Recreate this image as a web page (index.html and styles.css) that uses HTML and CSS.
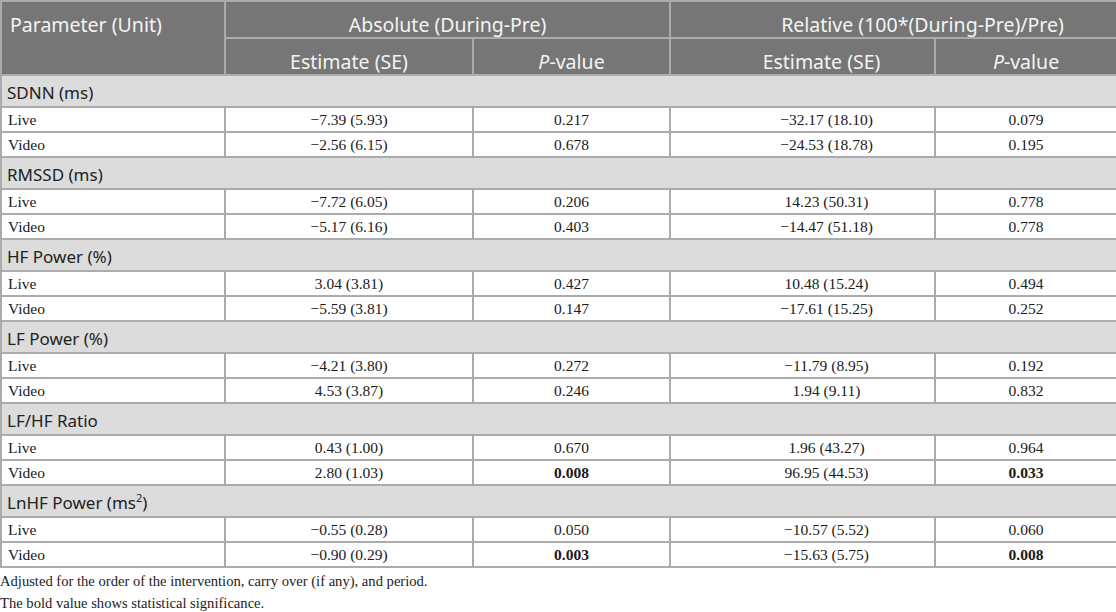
FILE: index.html
```html
<!DOCTYPE html>
<html lang="en">

<head>
  <meta charset="UTF-8">
  <meta name="viewport" content="width=device-width, initial-scale=1.0">
  <title>HRV table</title>

  <link rel="stylesheet" href="styles.css">
</head>

<body>
  <table class="results">
    <colgroup>
      <col class="col-param">
      <col class="col-est">
      <col class="col-p">
      <col class="col-rel">
      <col class="col-p2">
    </colgroup>
    <thead>
      <tr>
        <th rowspan="2" class="param-head">Parameter (Unit)</th>
        <th colspan="2">Absolute (During-Pre)</th>
        <th colspan="2" class="rel-head">Relative (100*(During-Pre)/Pre)</th>
      </tr>
      <tr>
        <th>Estimate (SE)</th>
        <th><i>P</i>-value</th>
        <th class="rel">Estimate (SE)</th>
        <th><i>P</i>-value</th>
      </tr>
    </thead>
    <tbody>
      <tr class="section"><td colspan="5">SDNN (ms)</td></tr>
      <tr><td class="label">Live</td><td>−7.39 (5.93)</td><td>0.217</td><td class="rel">−32.17 (18.10)</td><td>0.079</td></tr>
      <tr><td class="label">Video</td><td>−2.56 (6.15)</td><td>0.678</td><td class="rel">−24.53 (18.78)</td><td>0.195</td></tr>

      <tr class="section"><td colspan="5">RMSSD (ms)</td></tr>
      <tr><td class="label">Live</td><td>−7.72 (6.05)</td><td>0.206</td><td class="rel">14.23 (50.31)</td><td>0.778</td></tr>
      <tr><td class="label">Video</td><td>−5.17 (6.16)</td><td>0.403</td><td class="rel">−14.47 (51.18)</td><td>0.778</td></tr>

      <tr class="section"><td colspan="5">HF Power (%)</td></tr>
      <tr><td class="label">Live</td><td>3.04 (3.81)</td><td>0.427</td><td class="rel">10.48 (15.24)</td><td>0.494</td></tr>
      <tr><td class="label">Video</td><td>−5.59 (3.81)</td><td>0.147</td><td class="rel">−17.61 (15.25)</td><td>0.252</td></tr>

      <tr class="section"><td colspan="5">LF Power (%)</td></tr>
      <tr><td class="label">Live</td><td>−4.21 (3.80)</td><td>0.272</td><td class="rel">−11.79 (8.95)</td><td>0.192</td></tr>
      <tr><td class="label">Video</td><td>4.53 (3.87)</td><td>0.246</td><td class="rel">1.94 (9.11)</td><td>0.832</td></tr>

      <tr class="section"><td colspan="5">LF/HF Ratio</td></tr>
      <tr><td class="label">Live</td><td>0.43 (1.00)</td><td>0.670</td><td class="rel">1.96 (43.27)</td><td>0.964</td></tr>
      <tr><td class="label">Video</td><td>2.80 (1.03)</td><td><b>0.008</b></td><td class="rel">96.95 (44.53)</td><td><b>0.033</b></td></tr>

      <tr class="section"><td colspan="5">LnHF Power (ms<sup>2</sup>)</td></tr>
      <tr><td class="label">Live</td><td>−0.55 (0.28)</td><td>0.050</td><td class="rel">−10.57 (5.52)</td><td>0.060</td></tr>
      <tr><td class="label">Video</td><td>−0.90 (0.29)</td><td><b>0.003</b></td><td class="rel">−15.63 (5.75)</td><td><b>0.008</b></td></tr>
    </tbody>
  </table>

  <div class="notes">
    <p>Adjusted for the order of the intervention, carry over (if any), and period.</p>
    <p>The bold value shows statistical significance.</p>
  </div>
</body>

</html>
```

FILE: styles.css
```css
body {
  margin: 0;
  background: #fff;
  color: #1a1a1a;
  font-family: "Liberation Serif", "Times New Roman", serif;
}

.results {
  border-collapse: collapse;
  table-layout: fixed;
  width: 1116px;
}

.col-param {
  width: 224px;
}

.col-est {
  width: 248px;
}

.col-p {
  width: 197px;
}

.col-rel {
  width: 265px;
}

.col-p2 {
  width: 182px;
}

.results th,
.results td {
  border: 2px solid #ababab;
}

.results th {
  background: #767676;
  color: #f4f4f4;
  font-family: "Noto Sans", "Open Sans", sans-serif;
  font-size: 19.5px;
  font-weight: normal;
  height: 35px;
  line-height: 24px;
  padding: 11px 6px 0;
  text-align: center;
  vertical-align: top;
  box-sizing: border-box;
  white-space: nowrap;
}

.results th.param-head {
  text-align: left;
  padding-left: 8px;
}

.results th.rel-head {
  padding-left: 64px;
}

.results td {
  font-size: 15.5px;
  height: 20px;
  line-height: 18px;
  padding: 2px 6px 1px;
  text-align: center;
}

.results td.label {
  text-align: left;
  padding-left: 6px;
}

.results th.rel {
  padding-left: 44px;
}

.results td.rel {
  padding-left: 54px;
}

.section td {
  background: #dcdcdc;
  color: #222;
  font-family: "Noto Sans", "Open Sans", sans-serif;
  font-size: 17px;
  height: 27px;
  line-height: 24px;
  padding: 3px 5px 0;
  text-align: left;
}

.section sup {
  font-size: 11px;
  line-height: 0;
}

.notes {
  padding-top: 2px;
  font-size: 14.6px;
  color: #222;
}

.notes p {
  margin: 0;
  line-height: 22px;
}
```
